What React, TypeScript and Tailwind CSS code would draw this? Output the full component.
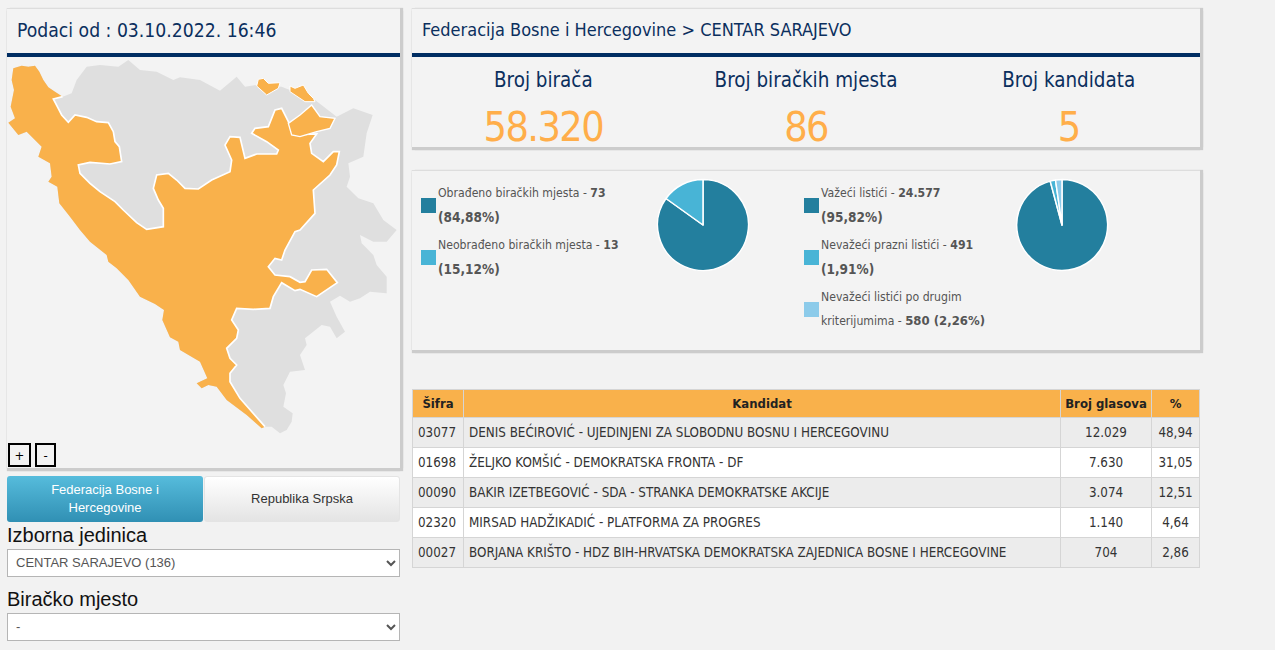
import React from "react";

// tragovi karte, koordinate su u 3x jedinicama (viewBox)
const low = (s: string) =>
  s.trim().split(/\s+/).map((p) => {
    const [x, y] = p.split(",").map(Number);
    return `${x},${y + 690}`;
  }).join(" ");

const BORDER_TOP =
  "188,290 160,297 172,320 185,345 205,367 225,345 260,352 290,365 325,368 340,395 345,425 358,440 365,485 330,492 270,487 235,495 240,520 270,550 300,575 345,605 370,630 410,668 440,688 490,680 490,625 475,600 460,565 470,525 505,520 530,540 555,565 595,567 635,540 690,515 695,480 675,435 690,410 720,412 735,475 770,462 830,462 835,450 800,425 755,400 765,385 805,380 825,330 845,325 865,365 880,405 950,402 930,430 935,460 970,485 1000,455 1018,455 1010,495 990,525 940,570 945,640 900,690";
const BORDER_LOW = low(
  "885,5 855,60 845,90 825,85 805,110 825,135 870,140 900,157 915,155 935,120 980,118 1012,158 950,200 900,178 885,182 845,158 820,200 810,235 760,238 710,235 695,270 715,300 710,325 680,355 690,385 710,405 690,430 690,455 720,505 795,590"
);
const COAST_LOW = low(
  "785,595 740,555 680,510 650,470 625,465 605,475 590,460 622,445 600,395 540,360 535,335 510,322 487,270 492,240 465,222 420,200 385,150 350,115 325,95 320,75 270,35 240,0"
);
const COAST_TOP =
  "210,650 178,610 172,560 145,545 155,530 150,490 115,470 125,440 80,395 55,405 25,368 45,355 32,320 42,270 35,240 40,205 65,197 85,200 105,197 118,215 130,240 145,262 165,275";
const EAST_TOP =
  "188,290 215,280 230,240 260,200 300,195 355,200 385,180 420,210 470,215 520,240 540,232 600,240 660,272 710,230 735,260 770,255 845,260 945,300 1010,350 1060,325 1118,345 1100,400 1090,470 1045,490 1050,530 1040,560 1075,595 1120,610 1150,660 1190,690";
const EAST_LOW = low(
  "1160,35 1120,35 1080,15 1085,40 1120,75 1130,105 1160,140 1160,190 1110,185 1080,205 1050,215 1020,197 990,215 1010,260 1035,305 1010,325 990,290 965,285 915,325 920,345 900,375 915,420 870,425 850,465 858,490 850,530 878,550 875,575 860,600 840,610 815,590 795,590"
);
const PIECE_A = "775,238 790,235 805,250 840,248 835,265 800,285 770,258";
const PIECE_B = "870,258 885,265 910,255 925,280 940,295 945,305 915,305 870,275";
const PIECE_C = "935,315 960,350 1005,355 990,385 950,395 900,410 875,405 865,370 900,345";

function BihMap() {
  return (
    <svg viewBox="21 171 1179 1233" className="block h-[411px] w-[393px]">
      <polygon fill="#dfdfdf" points={`${EAST_TOP} ${EAST_LOW} ${COAST_LOW} ${COAST_TOP}`} />
      <polygon fill="#f9b14b" points={`${BORDER_TOP} ${BORDER_LOW} ${COAST_LOW} ${COAST_TOP}`} />
      <polyline fill="none" stroke="#fff" strokeWidth={5} points={`${BORDER_TOP} ${BORDER_LOW}`} />
      <polygon fill="#f9b14b" stroke="#fff" strokeWidth={3} points={PIECE_A} />
      <polygon fill="#f9b14b" stroke="#fff" strokeWidth={3} points={PIECE_B} />
      <polygon fill="#f9b14b" stroke="#fff" strokeWidth={4} points={PIECE_C} />
    </svg>
  );
}

function Pie({ slices }: { slices: { d: string; color: string }[] }) {
  return (
    <svg viewBox="0 0 94 94" className="-mt-[1px] h-[94px] w-[94px] shrink-0">
      {slices.map((s) => (
        <path key={s.d} d={s.d} fill={s.color} stroke="#fff" strokeWidth={1.5} strokeLinejoin="round" />
      ))}
    </svg>
  );
}

function LegendItem({ color, first, second }: { color: string; first: React.ReactNode; second: React.ReactNode }) {
  return (
    <div className="flex items-center">
      <span className="h-[15px] w-[15px] shrink-0" style={{ background: color }} />
      <div className="ml-[2px] whitespace-nowrap text-[12.15px] text-[#555]">
        <div className="h-[25px] leading-[28px]">{first}</div>
        <div className="h-[27px] leading-[26px]">{second}</div>
      </div>
    </div>
  );
}

function Stat({ label, value }: { label: string; value: string }) {
  return (
    <div className="text-center">
      <div className="text-[20.4px] leading-[28px] text-[#0b2f5e]">{label}</div>
      <div className="mt-[8px] text-[41px] leading-[50px] tracking-[-1.6px] text-[#ffae4a]">{value}</div>
    </div>
  );
}

const ROWS = [
  ["03077", "DENIS BEĆIROVIĆ - UJEDINJENI ZA SLOBODNU BOSNU I HERCEGOVINU", "12.029", "48,94"],
  ["01698", "ŽELJKO KOMŠIĆ - DEMOKRATSKA FRONTA - DF", "7.630", "31,05"],
  ["00090", "BAKIR IZETBEGOVIĆ - SDA - STRANKA DEMOKRATSKE AKCIJE", "3.074", "12,51"],
  ["02320", "MIRSAD HADŽIKADIĆ - PLATFORMA ZA PROGRES", "1.140", "4,64"],
  ["00027", "BORJANA KRIŠTO - HDZ BIH-HRVATSKA DEMOKRATSKA ZAJEDNICA BOSNE I HERCEGOVINE", "704", "2,86"],
];

const panel =
  "border-t border-[#dddddd] bg-[#f3f3f3] shadow-[0_3px_1px_#cccccc,3px_0_1px_#cccccc,3px_3px_1px_#cccccc,-1px_0_0_#ebebeb]";
const selectCls =
  "block h-[28px] w-full border border-[#b5b5b5] bg-white px-[4px] pb-[1px] text-[13px] text-[#555] font-['Liberation_Sans',sans-serif]";

export default function App() {
  return (
    <div className="flex h-[650px] w-[1275px] overflow-hidden bg-[#f2f2f2] pl-[7px] pt-[8px] font-['DejaVu_Sans_Condensed','DejaVu_Sans',sans-serif]">
      <div className="w-[393px] shrink-0">
        <div className={`relative h-[460px] ${panel}`}>
          <div className="box-content flex h-[44px] items-center border-b-[4px] border-b-[#002d62] pl-[10px] text-[19.2px] text-[#0b2f5e]">
            Podaci od : 03.10.2022. 16:46
          </div>
          <BihMap />
          <div className="absolute bottom-[1px] left-[1px] flex gap-[4px]">
            <button type="button" className="h-[24px] w-[23px] border-[2px] border-black text-[13px] leading-none text-black">+</button>
            <button type="button" className="h-[24px] w-[21px] border-[2px] border-black text-[13px] leading-none text-black">-</button>
          </div>
        </div>

        <div className="mt-[8px] flex h-[46px] gap-[1px] font-['Liberation_Sans',sans-serif] text-[13px] leading-[18px]">
          <button type="button" className="w-[196px] rounded-[3px] bg-gradient-to-b from-[#56bcdc] to-[#3090b4] px-[30px] text-white">
            Federacija Bosne i Hercegovine
          </button>
          <button type="button" className="w-[196px] rounded-[3px] border border-[#e4e4e4] bg-gradient-to-b from-white to-[#e4e4e4] text-[#333]">
            Republika Srpska
          </button>
        </div>

        <div className="font-['Liberation_Sans',sans-serif] text-[20px] leading-[27px] text-[#111]">Izborna jedinica</div>
        <select className={selectCls} defaultValue="136">
          <option value="136">CENTAR SARAJEVO (136)</option>
        </select>
        <div className="mt-[8px] font-['Liberation_Sans',sans-serif] text-[20px] leading-[28px] text-[#111]">Biračko mjesto</div>
        <select className={selectCls} defaultValue="-">
          <option value="-">-</option>
        </select>
      </div>

      <div className="ml-[12px] w-[788px] shrink-0">
        <div className={`h-[139px] ${panel}`}>
          <div className="box-content flex h-[44px] items-center border-b-[4px] border-b-[#002d62] pb-0 pl-[10px] text-[18px] leading-[24px] text-[#0b2f5e]">
            <span className="-mt-[2px]">Federacija Bosne i Hercegovine &gt; CENTAR SARAJEVO</span>
          </div>
          <div className="grid grid-cols-3 pt-[9px]">
            <Stat label="Broj birača" value="58.320" />
            <Stat label="Broj biračkih mjesta" value="86" />
            <Stat label="Broj kandidata" value="5" />
          </div>
        </div>

        <div className={`mt-[23px] flex h-[180px] items-start pt-[8px] ${panel}`}>
          <div className="ml-[9px] w-[235px] shrink-0">
            <LegendItem color="#237f9e" first={<>Obrađeno biračkih mjesta - <b>73</b></>} second={<b className="text-[13.5px]">(84,88%)</b>} />
            <LegendItem color="#48b4d6" first={<>Neobrađeno biračkih mjesta - <b>13</b></>} second={<b className="text-[13.5px]">(15,12%)</b>} />
          </div>
          <Pie
            slices={[
              { d: "M47 47 L47 1.5 A45.5 45.5 0 1 1 10 20.5 Z", color: "#237f9e" },
              { d: "M47 47 L10 20.5 A45.5 45.5 0 0 1 47 1.5 Z", color: "#48b4d6" },
            ]}
          />
          <div className="ml-[54px] w-[211px] shrink-0">
            <LegendItem color="#237f9e" first={<>Važeći listići - <b>24.577</b></>} second={<b className="text-[13.5px]">(95,82%)</b>} />
            <LegendItem color="#48b4d6" first={<>Nevažeći prazni listići - <b>491</b></>} second={<b className="text-[13.5px]">(1,91%)</b>} />
            <LegendItem color="#8ccbea" first="Nevažeći listići po drugim" second={<>kriterijumima - <b className="text-[13px]">580 (2,26%)</b></>} />
          </div>
          <Pie
            slices={[
              { d: "M47 47 L47 1.5 A45.5 45.5 0 1 1 35.2 3.1 Z", color: "#237f9e" },
              { d: "M47 47 L35.2 3.1 A45.5 45.5 0 0 1 40.5 2 Z", color: "#48b4d6" },
              { d: "M47 47 L40.5 2 A45.5 45.5 0 0 1 47 1.5 Z", color: "#8ccbea" },
            ]}
          />
        </div>

        <table className="mt-[39px] w-[787px] table-fixed border-collapse text-[13.3px] text-[#333]">
          <colgroup>
            <col className="w-[51px]" />
            <col className="w-[597px]" />
            <col className="w-[91px]" />
            <col className="w-[48px]" />
          </colgroup>
          <thead>
            <tr className="h-[28px] bg-[#f9b14b] text-[13px] font-bold text-[#222]">
              <th className="border border-[#d5d5d5]">Šifra</th>
              <th className="border border-[#d5d5d5]">Kandidat</th>
              <th className="border border-[#d5d5d5]">Broj glasova</th>
              <th className="border border-[#d5d5d5]">%</th>
            </tr>
          </thead>
          <tbody>
            {ROWS.map((r, i) => (
              <tr key={r[0]} className={i % 2 === 0 ? "h-[30px] bg-[#ececec]" : "h-[30px] bg-white"}>
                <td className="border border-[#d5d5d5] pl-[5px]">{r[0]}</td>
                <td className="border border-[#d5d5d5] pl-[5px]">{r[1]}</td>
                <td className="border border-[#d5d5d5] text-center">{r[2]}</td>
                <td className="border border-[#d5d5d5] text-center">{r[3]}</td>
              </tr>
            ))}
          </tbody>
        </table>
      </div>
    </div>
  );
}
